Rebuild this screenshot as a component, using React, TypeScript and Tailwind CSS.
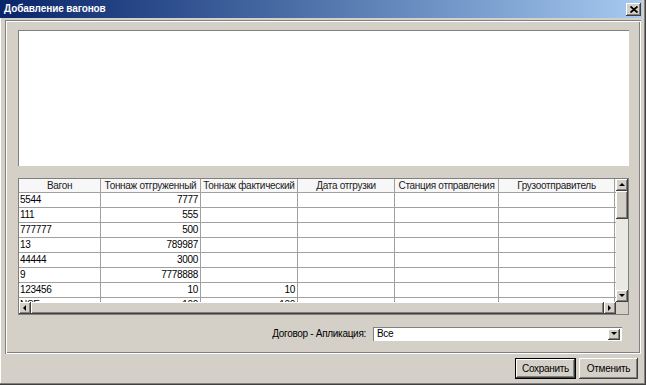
import React from "react";

const raised =
  "bg-[#d4d0c8] shadow-[inset_-1px_-1px_0_#404040,inset_1px_1px_0_#ffffff,inset_-2px_-2px_0_#808080,inset_2px_2px_0_#d4d0c8]";

function Arrow({ dir }: { dir: "up" | "down" | "left" | "right" }) {
  const pts: Record<string, string> = {
    up: "1,5 4,2 7,5",
    down: "1,2 4,5 7,2",
    left: "5,1 2,4 5,7",
    right: "2,1 5,4 2,7",
  };
  return (
    <svg width="8" height="8" viewBox="0 0 8 8">
      <polygon points={pts[dir]} fill="#000" />
    </svg>
  );
}

function SBtn({ dir }: { dir: "up" | "down" | "left" | "right" }) {
  return (
    <div className={`w-[12px] h-[12px] shrink-0 flex items-center justify-center ${raised}`}>
      <Arrow dir={dir} />
    </div>
  );
}

const cols = [
  { title: "Вагон", w: "w-[82px]" },
  { title: "Тоннаж отгруженный", w: "w-[100px]" },
  { title: "Тоннаж фактический", w: "w-[97px]" },
  { title: "Дата отгрузки", w: "w-[97px]" },
  { title: "Станция отправления", w: "w-[104px]" },
  { title: "Грузоотправитель", w: "w-[116px]" },
];

const rows: [string, string, string][] = [
  ["5544", "7777", ""],
  ["111", "555", ""],
  ["777777", "500", ""],
  ["13", "789987", ""],
  ["44444", "3000", ""],
  ["9", "7778888", ""],
  ["123456", "10", "10"],
  ["NSE", "100", "100"],
];

export default function App() {
  return (
    <div className="w-[646px] h-[385px] bg-[#d4d0c8] flex flex-col overflow-hidden text-[10px] tracking-[-0.3px] leading-none text-black font-['Liberation_Sans',Arial,sans-serif] shadow-[inset_-1px_-1px_0_#404040,inset_-2px_-2px_0_#808080,inset_1px_0_0_#ffffff]">
      {/* title bar */}
      <div className="h-[18px] mr-[4px] shrink-0 flex items-center justify-between bg-linear-to-r from-[#0a246a] to-[#a6caf0] pl-[4px] pr-[1px]">
        <span className="text-white font-bold text-[10px] tracking-[-0.1px]">Добавление вагонов</span>
        <div className={`w-[15px] h-[13px] flex items-center justify-center ${raised}`}>
          <svg width="8" height="7" viewBox="0 0 8 7">
            <path d="M0.5 0.5 L7.5 6.5 M7.5 0.5 L0.5 6.5" stroke="#000" strokeWidth="1.8" />
          </svg>
        </div>
      </div>

      {/* group panel */}
      <div className="mt-[2px] mx-[5px] h-[334px] shrink-0 flex flex-col pt-[10px] pl-[13px] pr-[12px] shadow-[inset_1px_1px_0_#808080,inset_-1px_-1px_0_#ffffff,inset_2px_2px_0_#ffffff,inset_-2px_-2px_0_#808080]">
        <div className="h-[136px] shrink-0 bg-white shadow-[inset_1px_1px_0_#808080,inset_-1px_-1px_0_#ffffff]" />

        {/* grid */}
        <div className="mt-[12px] h-[137px] shrink-0 flex flex-col border border-[#808080] bg-[#d4d0c8]">
          <div className="flex-1 flex min-h-0">
            <div className="flex-1 overflow-hidden bg-white flex flex-col">
              <div className="h-[14px] shrink-0 flex bg-[#f7f7f7] border-b border-[#a0a0a0]">
                {cols.map((c) => (
                  <div
                    key={c.title}
                    className={`${c.w} shrink-0 flex items-center justify-center border-r border-[#a0a0a0] whitespace-nowrap text-[#222]`}
                  >
                    {c.title}
                  </div>
                ))}
              </div>
              {rows.map((r, i) => (
                <div key={i} className="h-[15px] shrink-0 flex border-b border-[#a0a0a0]">
                  <div className="w-[82px] shrink-0 flex items-center pl-[1px] border-r border-[#a0a0a0]">{r[0]}</div>
                  <div className="w-[100px] shrink-0 flex items-center justify-end pr-[2px] border-r border-[#a0a0a0]">{r[1]}</div>
                  <div className="w-[97px] shrink-0 flex items-center justify-end pr-[2px] border-r border-[#a0a0a0]">{r[2]}</div>
                  <div className="w-[97px] shrink-0 border-r border-[#a0a0a0]" />
                  <div className="w-[104px] shrink-0 border-r border-[#a0a0a0]" />
                  <div className="w-[116px] shrink-0 border-r border-[#a0a0a0]" />
                </div>
              ))}
            </div>
            {/* vertical scrollbar */}
            <div className="w-[12px] shrink-0 flex flex-col bg-[#ebe9e4]">
              <SBtn dir="up" />
              <div className={`h-[28px] shrink-0 ${raised}`} />
              <div className="flex-1" />
              <SBtn dir="down" />
            </div>
          </div>
          {/* horizontal scrollbar */}
          <div className="h-[12px] shrink-0 flex bg-[#ebe9e4]">
            <SBtn dir="left" />
            <div className={`flex-1 ${raised}`} />
            <SBtn dir="right" />
            <div className="w-[12px] shrink-0 bg-[#d4d0c8]" />
          </div>
        </div>

        {/* combo row */}
        <div className="mt-[12px] h-[14px] shrink-0 flex items-center justify-end pr-[7px]">
          <span className="mr-[7px]">Договор - Апликация:</span>
          <div className="w-[249px] h-[14px] flex items-center bg-white shadow-[inset_1px_1px_0_#808080,inset_-1px_-1px_0_#ffffff]">
            <span className="pl-[4px] flex-1">Все</span>
            <div className={`w-[12px] h-[11px] mr-[2px] flex items-center justify-center ${raised}`}>
              <Arrow dir="down" />
            </div>
          </div>
        </div>
      </div>

      {/* buttons */}
      <div className="mt-[4px] flex justify-end gap-[3px] pr-[8px]">
        <div className="w-[61px] h-[21px] flex items-center justify-center bg-[#d4d0c8] shadow-[inset_0_0_0_1px_#000000,inset_-2px_-2px_0_#404040,inset_2px_2px_0_#ffffff,inset_-3px_-3px_0_#808080]">
          Сохранить
        </div>
        <div className={`w-[59px] h-[21px] flex items-center justify-center ${raised}`}>Отменить</div>
      </div>
    </div>
  );
}
